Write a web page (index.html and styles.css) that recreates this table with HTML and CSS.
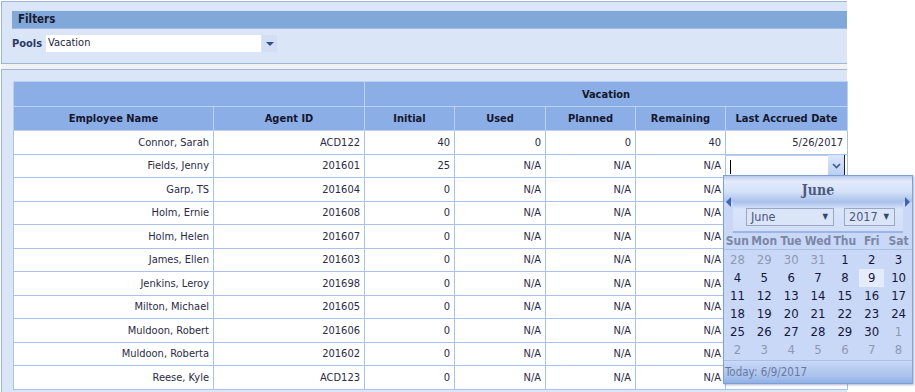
FILE: index.html
```html
<!DOCTYPE html>
<html>
<head>
<meta charset="utf-8">
<link rel="stylesheet" href="styles.css">
</head>
<body>
<div class="page">
  <div class="panel filters">
    <div class="filters-bar">Filters</div>
    <div class="pools-row">
      <span class="pools-label">Pools</span>
      <div class="combo">
        <span class="combo-text">Vacation</span>
        <span class="combo-btn"><svg width="8" height="4" viewBox="0 0 8 4"><path d="M0 0H8L4 4Z" fill="#2f4f8f"/></svg></span>
      </div>
    </div>
  </div>
  <div class="gap"></div>
  <div class="panel grid-panel">
    <table class="grid">
      <colgroup>
        <col class="c-name"><col class="c-id"><col class="c-num"><col class="c-num2"><col class="c-num"><col class="c-num"><col class="c-date">
      </colgroup>
      <thead>
        <tr class="h1"><th colspan="2"></th><th colspan="5">Vacation</th></tr>
        <tr class="h2"><th>Employee Name</th><th>Agent ID</th><th>Initial</th><th>Used</th><th>Planned</th><th>Remaining</th><th>Last Accrued Date</th></tr>
      </thead>
      <tbody>
        <tr><td>Connor, Sarah</td><td>ACD122</td><td>40</td><td>0</td><td>0</td><td>40</td><td>5/26/2017</td></tr>
        <tr><td>Fields, Jenny</td><td>201601</td><td>25</td><td>N/A</td><td>N/A</td><td>N/A</td><td class="edit-cell"><div class="date-edit"><span class="date-input"><span class="caret"></span></span><span class="date-btn"><svg width="9" height="6" viewBox="0 0 9 6"><path d="M1 1L4.5 4.5L8 1" fill="none" stroke="#3b5a9a" stroke-width="1.6"/></svg></span></div></td></tr>
        <tr><td>Garp, TS</td><td>201604</td><td>0</td><td>N/A</td><td>N/A</td><td>N/A</td><td></td></tr>
        <tr><td>Holm, Ernie</td><td>201608</td><td>0</td><td>N/A</td><td>N/A</td><td>N/A</td><td></td></tr>
        <tr><td>Holm, Helen</td><td>201607</td><td>0</td><td>N/A</td><td>N/A</td><td>N/A</td><td></td></tr>
        <tr><td>James, Ellen</td><td>201603</td><td>0</td><td>N/A</td><td>N/A</td><td>N/A</td><td></td></tr>
        <tr><td>Jenkins, Leroy</td><td>201698</td><td>0</td><td>N/A</td><td>N/A</td><td>N/A</td><td></td></tr>
        <tr><td>Milton, Michael</td><td>201605</td><td>0</td><td>N/A</td><td>N/A</td><td>N/A</td><td></td></tr>
        <tr><td>Muldoon, Robert</td><td>201606</td><td>0</td><td>N/A</td><td>N/A</td><td>N/A</td><td></td></tr>
        <tr><td>Muldoon, Roberta</td><td>201602</td><td>0</td><td>N/A</td><td>N/A</td><td>N/A</td><td></td></tr>
        <tr><td>Reese, Kyle</td><td>ACD123</td><td>0</td><td>N/A</td><td>N/A</td><td>N/A</td><td></td></tr>
      </tbody>
    </table>
  </div>

  <div class="cal">
    <div class="cal-title">June</div>
    <span class="cal-arrow left"><svg width="5" height="10" viewBox="0 0 5 10"><path d="M5 0V10L0 5Z" fill="#3f63b5"/></svg></span>
    <span class="cal-arrow right"><svg width="5" height="10" viewBox="0 0 5 10"><path d="M0 0V10L5 5Z" fill="#3f63b5"/></svg></span>
    <div class="cal-nav">
      <div class="cal-select month"><span>June</span><span class="tri">▼</span></div>
      <div class="cal-select year"><span>2017</span><span class="tri">▼</span></div>
    </div>
    <div class="cal-body">
      <div class="cal-row cal-head"><span>Sun</span><span>Mon</span><span>Tue</span><span>Wed</span><span>Thu</span><span>Fri</span><span>Sat</span></div>
      <div class="cal-days">
        <div class="cal-row"><span class="other">28</span><span class="other">29</span><span class="other">30</span><span class="other">31</span><span>1</span><span>2</span><span>3</span></div>
        <div class="cal-row"><span>4</span><span>5</span><span>6</span><span>7</span><span>8</span><span class="today">9</span><span>10</span></div>
        <div class="cal-row"><span>11</span><span>12</span><span>13</span><span>14</span><span>15</span><span>16</span><span>17</span></div>
        <div class="cal-row"><span>18</span><span>19</span><span>20</span><span>21</span><span>22</span><span>23</span><span>24</span></div>
        <div class="cal-row"><span>25</span><span>26</span><span>27</span><span>28</span><span>29</span><span>30</span><span class="other">1</span></div>
        <div class="cal-row"><span class="other">2</span><span class="other">3</span><span class="other">4</span><span class="other">5</span><span class="other">6</span><span class="other">7</span><span class="other">8</span></div>
      </div>
    </div>
    <div class="cal-foot">Today: 6/9/2017</div>
  </div>
</div>
</body>
</html>
```
FILE: styles.css
```css
html, body {
  margin: 0;
  padding: 0;
  background: #ffffff;
}
body {
  font-family: Tahoma, "DejaVu Sans Condensed", "DejaVu Sans", sans-serif;
  font-stretch: condensed;
  font-size: 11px;
  color: #1e1e3c;
}
.page {
  position: relative;
  width: 846px;
  padding: 1px 0 0 1px;
}
.panel {
  background: #dbe5f8;
  border-top: 1px solid #9fb6dc;
  border-left: 1px solid #9fb6dc;
}
.filters {
  border-bottom: 1px solid #9fb6dc;
  padding-top: 9px;
  box-sizing: border-box;
  height: 63px;
}
.filters-bar {
  margin-left: 10px;
  height: 17px;
  line-height: 17px;
  background: #80a9d9;
  border-bottom: 1px solid #9dbde6;
  font-weight: bold;
  font-size: 11.5px;
  color: #1a1a33;
  padding-left: 6px;
}
.pools-row {
  display: flex;
  align-items: center;
  margin-top: 6px;
  padding-left: 10px;
  height: 17px;
}
.pools-label {
  font-weight: bold;
  color: #2a3a66;
  width: 34px;
}
.combo {
  display: flex;
  height: 17px;
}
.combo-text {
  width: 215px;
  background: #fff;
  padding-left: 2px;
  line-height: 16px;
  box-sizing: border-box;
  color: #1e1e3c;
}
.combo-btn {
  width: 15px;
  margin-left: 1px;
  background: #d3def4;
  display: flex;
  align-items: center;
  justify-content: center;
}
.gap {
  height: 5px;
  background: #f2f2f2;
}
.grid-panel {
  padding: 11px 0 0 11px;
  height: 330px;
  box-sizing: border-box;
}
.grid {
  border-collapse: collapse;
  table-layout: fixed;
  width: 834px;
  background: #fff;
}
.c-name { width: 200px; }
.c-id { width: 151px; }
.c-num { width: 90px; }
.c-num2 { width: 91px; }
.c-date { width: 122px; }
.grid th {
  background: #8aaee5;
  border: 1px solid #bcd0f0;
  font-weight: bold;
  color: #16162e;
  text-align: center;
  padding: 0;
}
.grid .h1 th { height: 24px; }
.grid .h2 th { height: 23px; }
.grid td {
  border: 1px solid #a9c2ea;
  text-align: right;
  padding: 0 4px 0 0;
  height: 22.5px;
  white-space: nowrap;
  color: #2a2a44;
}
.grid td.edit-cell {
  padding: 0;
}
.date-edit {
  display: flex;
  height: 22px;
  border-right: 1px solid #222;
  margin-right: 2px;
}
.date-input {
  flex: 1;
  border-top: 1px solid #b9cdee;
  position: relative;
}
.caret {
  position: absolute;
  left: 4px;
  top: 4px;
  width: 1px;
  height: 14px;
  background: #000;
}
.date-btn {
  width: 16px;
  background: linear-gradient(#dbe6fa, #b9cdf2);
  display: flex;
  align-items: center;
  justify-content: center;
}

/* calendar popup */
.cal {
  position: absolute;
  left: 723px;
  top: 175px;
  width: 188px;
  border: 1px solid #7f9fd6;
  background: #c8d8f6;
  box-shadow: 1px 1px 2px rgba(90,110,160,0.5);
}
.cal-title {
  height: 26px;
  line-height: 29px;
  text-align: center;
  font-family: "DejaVu Serif", serif;
  font-stretch: condensed;
  font-weight: bold;
  font-size: 14px;
  color: #4d5a80;
  background: linear-gradient(#b7cbef 0%, #e3ebfb 20%, #d4e1f8 60%, #a9c1ec 100%);
}
.cal-arrow {
  position: absolute;
  top: 21px;
  line-height: 0;
}
.cal-arrow.left { left: 2px; }
.cal-arrow.right { right: 2px; }
.cal-nav {
  margin: 0 9px;
  height: 29px;
  background: linear-gradient(#aac1ec 0%, #d9e5fa 25%, #d2def8 100%);
  display: flex;
  align-items: center;
  gap: 10px;
  padding-left: 13px;
  border-bottom: 2px solid #9ab5e6;
}
.cal-select {
  height: 18px;
  border: 1px solid #9aa6c4;
  background: #dbe5f8;
  display: flex;
  align-items: center;
  justify-content: space-between;
  box-sizing: border-box;
  font-size: 12.5px;
  color: #4a5680;
  padding: 0 5px 0 4px;
}
.cal-select .tri { font-size: 8px; color: #3a4670; }
.cal-select.month { width: 88px; }
.cal-select.year { width: 51px; }
.cal-body {
  padding-top: 1px;
}
.cal-row {
  display: grid;
  grid-template-columns: repeat(7, 1fr);
  text-align: center;
}
.cal-head {
  font-weight: bold;
  font-size: 12px;
  color: #7c87a7;
  height: 15px;
  line-height: 14px;
  border-bottom: 1px solid #a8bfe8;
}
.cal-days .cal-row {
  height: 18px;
  line-height: 18px;
  font-size: 13px;
  color: #16163a;
}
.cal-days {
  padding-top: 1px;
}
.cal-days span.other { color: #8e98b3; }
.cal-days span.today {
  background: #e4ecfb;
  margin: 0 1px;
}
.cal-foot {
  margin-top: 1px;
  height: 22px;
  line-height: 22px;
  border-top: 1px solid #a8bfe8;
  background: linear-gradient(#c9d9f7, #a9c2ec 70%, #8fb0e6);
  color: #6b78a0;
  font-size: 11.5px;
  padding-left: 1px;
}
```
